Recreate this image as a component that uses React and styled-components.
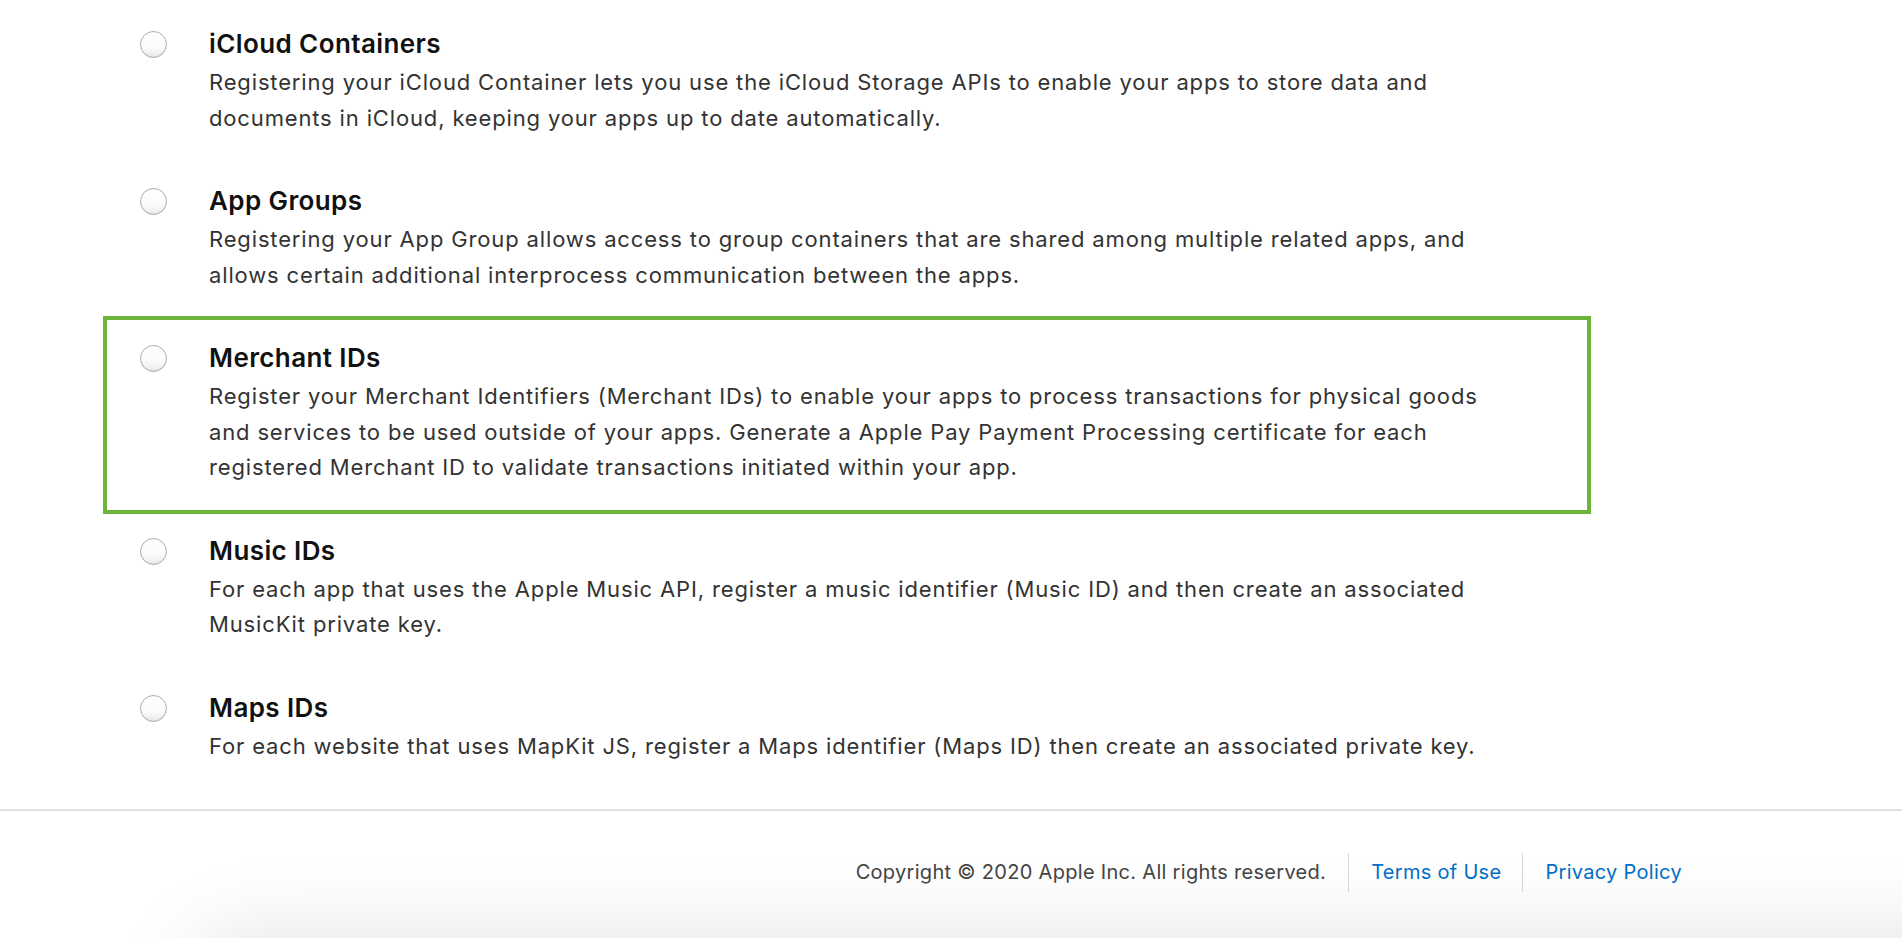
import React from 'react'
import styled, { createGlobalStyle } from 'styled-components'

const GlobalStyle = createGlobalStyle`
  html, body {
    margin: 0;
    padding: 0;
    background: #fff;
  }
  body {
    font-family: Inter, 'Noto Sans', 'Liberation Sans', sans-serif;
    -webkit-font-smoothing: antialiased;
  }
`

const Page = styled.div`
  min-height: 938px;
  display: flex;
  flex-direction: column;
  overflow: hidden;
`

const List = styled.div`
  display: flex;
  flex-direction: column;
  padding: 6px 0 18px 107px;
`

const Item = styled(({ highlighted, ...props }) => <div {...props} />)`
  position: relative;
  display: flex;
  align-items: flex-start;
  width: 1480px;
  box-sizing: border-box;
  padding: 23px 0 27px 33px;

  &::after {
    content: '';
    display: ${props => (props.highlighted ? 'block' : 'none')};
    position: absolute;
    inset: -4px -4px -1px -4px;
    border: 4px solid #6cb43c;
    pointer-events: none;
  }
`

const Radio = styled.span`
  flex: none;
  width: 27px;
  height: 27px;
  margin-top: 2px;
  margin-right: 42px;
  box-sizing: border-box;
  border-radius: 50%;
  border: 1px solid #ababab;
  background: linear-gradient(to bottom, #ffffff 0%, #fbfbfb 60%, #ececec 100%);
  box-shadow: inset 0 -1px 1px rgba(0, 0, 0, 0.06);
`

const Body = styled.div`
  display: flex;
  flex-direction: column;
`

const Title = styled.h3`
  margin: 0 0 6px;
  font-size: 26px;
  line-height: 30px;
  font-weight: 600;
  color: #111;
  letter-spacing: 0.4px;
`

const Line = styled.span`
  display: block;
  font-size: 22px;
  line-height: 35.5px;
  color: #333;
  white-space: nowrap;
  letter-spacing: 0.85px;
`

const Footer = styled.footer`
  position: relative;
  flex: 1;
  border-top: 2px solid #e1e1e1;
  display: flex;
  justify-content: flex-end;
  align-items: flex-start;
  padding: 42px 220px 0 0;
  overflow: hidden;

  &::after {
    content: '';
    position: absolute;
    left: 190px;
    right: -200px;
    top: 100%;
    height: 120px;
    border-radius: 60px;
    box-shadow: 0 0 90px rgba(0, 0, 0, 0.12);
  }
`

const Copyright = styled.span`
  font-size: 20px;
  line-height: 39px;
  color: #444;
  letter-spacing: 0.3px;
  padding-right: 22px;
`

const FooterLink = styled.a`
  font-size: 20px;
  line-height: 39px;
  color: #0070c9;
  text-decoration: none;
  letter-spacing: 0.3px;
  padding: 0 0 0 22px;
  border-left: 1px solid #d8d8d8;

  & + & {
    margin-left: 21px;
  }
`

const items = [
  {
    title: 'iCloud Containers',
    lines: [
      'Registering your iCloud Container lets you use the iCloud Storage APIs to enable your apps to store data and',
      'documents in iCloud, keeping your apps up to date automatically.'
    ]
  },
  {
    title: 'App Groups',
    lines: [
      'Registering your App Group allows access to group containers that are shared among multiple related apps, and',
      'allows certain additional interprocess communication between the apps.'
    ]
  },
  {
    title: 'Merchant IDs',
    highlighted: true,
    lines: [
      'Register your Merchant Identifiers (Merchant IDs) to enable your apps to process transactions for physical goods',
      'and services to be used outside of your apps. Generate a Apple Pay Payment Processing certificate for each',
      'registered Merchant ID to validate transactions initiated within your app.'
    ]
  },
  {
    title: 'Music IDs',
    lines: [
      'For each app that uses the Apple Music API, register a music identifier (Music ID) and then create an associated',
      'MusicKit private key.'
    ]
  },
  {
    title: 'Maps IDs',
    lines: [
      'For each website that uses MapKit JS, register a Maps identifier (Maps ID) then create an associated private key.'
    ]
  }
]

export default function App() {
  return (
    <Page>
      <GlobalStyle />
      <List>
        {items.map(item => (
          <Item key={item.title} highlighted={item.highlighted}>
            <Radio />
            <Body>
              <Title>{item.title}</Title>
              {item.lines.map(line => (
                <Line key={line}>{line}</Line>
              ))}
            </Body>
          </Item>
        ))}
      </List>
      <Footer>
        <Copyright>Copyright © 2020 Apple Inc. All rights reserved.</Copyright>
        <FooterLink href='#'>Terms of Use</FooterLink>
        <FooterLink href='#'>Privacy Policy</FooterLink>
      </Footer>
    </Page>
  )
}
